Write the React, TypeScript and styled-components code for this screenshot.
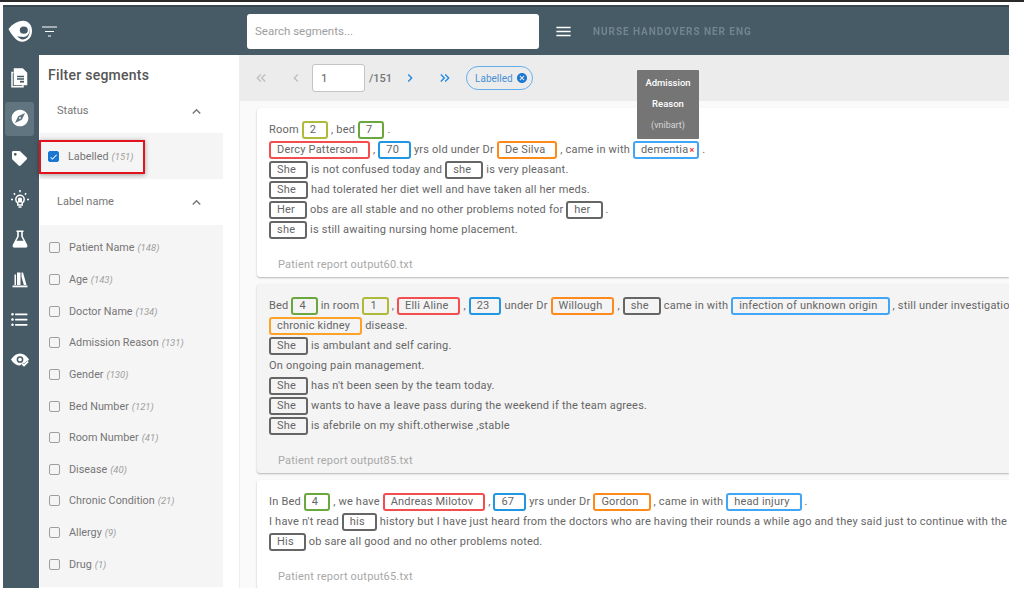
import React from 'react';
import styled, { createGlobalStyle } from 'styled-components';
import {
  MdCancel,
  MdCheck,
  MdChevronLeft,
  MdChevronRight,
  MdExpandLess,
  MdExplore,
  MdFormatListBulleted,
  MdKeyboardDoubleArrowLeft,
  MdKeyboardDoubleArrowRight,
  MdMenu,
} from 'react-icons/md';
import { FaTag } from 'react-icons/fa';

const GlobalStyle = createGlobalStyle`
  html, body {
    margin: 0;
    padding: 0;
    background: #fff;
    font-family: Roboto, "Liberation Sans", sans-serif;
    color: #666;
  }
`;

// the reference is a slightly scaled screenshot, everything in it is a bit soft
const Page = styled.div`
  width: 1024px;
  height: 598px;
  overflow: hidden;
  border-top: 2px solid #2a2a2a;
  box-sizing: border-box;
  padding: 3px 15px 10px 3px;
  position: relative;
  filter: blur(0.35px);
`;

const Shell = styled.div`
  height: 583px;
  display: flex;
  flex-direction: column;
  overflow: hidden;
`;

const TopBar = styled.header`
  height: 50px;
  flex: none;
  box-sizing: border-box;
  border-top: 2px solid #37474f;
  background: #475b66;
  display: flex;
  align-items: center;
  padding-left: 5px;
`;

const Brand = styled.div`
  width: 239px;
  display: flex;
  align-items: center;
  gap: 9px;
  color: #fff;
`;

const SearchBox = styled.input`
  width: 292px;
  height: 35px;
  box-sizing: border-box;
  border: 0;
  border-radius: 3px;
  padding: 0 8px;
  font: 11.5px Roboto, sans-serif;
  background: #fff;
  &::placeholder {
    color: #9e9e9e;
  }
`;

const MenuButton = styled.div`
  display: flex;
  margin: 0 20px 0 15px;
  color: #fff;
`;

const ProjectTitle = styled.div`
  font-size: 10px;
  font-weight: 700;
  letter-spacing: 0.95px;
  color: #71858f;
`;

const Body = styled.div`
  flex: 1;
  min-height: 0;
  display: flex;
`;

const Rail = styled.nav`
  width: 36px;
  flex: none;
  background: #475b66;
  box-sizing: border-box;
  padding: 7px 0 0 2px;
  display: flex;
  flex-direction: column;
  gap: 6.4px;
`;

const RailItem = styled.div<{ $active?: boolean }>`
  width: 29px;
  height: 34px;
  border-radius: 3px;
  background: ${(p) => (p.$active ? '#60757f' : 'transparent')};
  color: #fff;
  display: flex;
  align-items: center;
  justify-content: center;
  padding-bottom: 3px;
  box-sizing: border-box;
`;

const FilterPanel = styled.aside`
  width: 201px;
  flex: none;
  box-sizing: border-box;
  background: #fff;
  padding-left: 1px;
  border-right: 1px solid #eeeeee;
`;

const PanelTitle = styled.h2`
  margin: 0;
  height: 40px;
  padding-left: 8px;
  line-height: 40px;
  font-size: 14px;
  font-weight: 500;
  letter-spacing: 0.25px;
  color: #555;
`;

const SectionHead = styled.div<{ $first?: boolean }>`
  width: 183px;
  height: ${(p) => (p.$first ? '38px' : '46px')};
  padding: 0 17px ${(p) => (p.$first ? '8px' : '2px')};
  box-sizing: border-box;
  display: flex;
  align-items: center;
  justify-content: space-between;
  font-size: 11px;
  color: #757575;
`;

const Chevron = styled(MdExpandLess)`
  font-size: 17px;
  color: #757575;
  margin: 2px 1px 0 0;
`;

const StatusBlock = styled.div`
  width: 183px;
  height: 46px;
  background: #f5f5f5;
  display: flex;
  align-items: center;
`;

const Highlight = styled.div`
  width: 106px;
  height: 34px;
  box-sizing: border-box;
  border: 2px solid #e0141c;
  box-shadow: 0 1px 5px rgba(0, 0, 0, 0.35);
  display: flex;
  align-items: center;
  padding-left: 7px;
  margin-left: -1px;
  margin-top: 1px;
`;

const LabelList = styled.div`
  width: 183px;
  height: 362px;
  box-sizing: border-box;
  background: #f5f5f5;
  padding: 7px 0 0 9px;
`;

const Option = styled.label`
  height: 31.65px;
  display: flex;
  align-items: center;
`;

const Box = styled.span<{ $checked?: boolean }>`
  width: 11px;
  height: 11px;
  box-sizing: border-box;
  flex: none;
  margin-right: 9px;
  border-radius: 2px;
  border: 1px solid ${(p) => (p.$checked ? '#1976d2' : '#9e9e9e')};
  background: ${(p) => (p.$checked ? '#1976d2' : 'transparent')};
  color: #fff;
  display: flex;
  align-items: center;
  justify-content: center;
  font-size: 10px;
`;

const OptionText = styled.span`
  font-size: 10.8px;
  color: #757575;
  white-space: nowrap;
`;

const Count = styled.em`
  font-size: 9.5px;
  color: #9e9e9e;
  margin-left: 3px;
`;

const Main = styled.main`
  flex: 1;
  min-width: 0;
  overflow: hidden;
  background: #fff;
`;

const Pager = styled.div`
  height: 46px;
  background: #ececec;
  display: flex;
  align-items: center;
  padding-left: 13px;
  box-sizing: border-box;
`;

const PageButton = styled.span<{ $enabled?: boolean; $gap: number }>`
  display: flex;
  font-size: 16px;
  color: ${(p) => (p.$enabled ? '#1e88e5' : '#bdbdbd')};
  margin-right: ${(p) => p.$gap}px;
`;

const PageInput = styled.input`
  width: 53px;
  height: 28px;
  box-sizing: border-box;
  border: 1px solid #c4c4c4;
  border-radius: 3px;
  background: #fff;
  padding: 0 8px;
  font: 11.5px Roboto, sans-serif;
  color: #616161;
`;

const PageTotal = styled.span`
  font-size: 11px;
  font-weight: 500;
  color: #757575;
  margin: 0 10px 0 4px;
`;

const Chip = styled.span`
  height: 24px;
  box-sizing: border-box;
  border: 1px solid #64b0ee;
  border-radius: 12px;
  display: flex;
  align-items: center;
  gap: 3px;
  padding: 0 4px 0 8px;
  margin-left: 8px;
  font-size: 10px;
  color: #4a90d6;
`;

const ChipClose = styled(MdCancel)`
  font-size: 12px;
  color: #1976d2;
`;

const CardList = styled.div`
  padding: 7px 0 0 17px;
  display: flex;
  flex-direction: column;
  gap: 7px;
  background: #fafafa;
`;

const Card = styled.article<{ $shaded?: boolean }>`
  padding: 12px 0 3px 12px;
  background: ${(p) => (p.$shaded ? '#f4f4f4' : '#fff')};
  border-radius: 3px 0 0 3px;
  box-shadow: 0 1px 2px rgba(0, 0, 0, 0.28);
`;

const Line = styled.div`
  height: 20px;
  line-height: 20px;
  font-size: 11px;
  letter-spacing: 0.2px;
  white-space: nowrap;
  overflow: hidden;
`;

const tagColors = {
  room: '#afb93a',
  bed: '#6aa83f',
  name: '#f44d4d',
  age: '#2196e3',
  doctor: '#ff8a1c',
  pronoun: '#666666',
  reason: '#42a5f5',
  chronic: '#ffa226',
};

type TagKind = keyof typeof tagColors;

const Tag = styled.span<{ $kind: TagKind; $removable?: boolean }>`
  display: inline-block;
  height: 18px;
  line-height: 14px;
  box-sizing: border-box;
  vertical-align: top;
  margin-top: 1px;
  border: 2px solid ${(p) => tagColors[p.$kind]};
  border-radius: 3px;
  padding: 0 ${(p) => (p.$removable ? '3px' : '10px')} 0 6px;
`;

const RemoveMark = styled.span`
  color: #f44336;
  font-size: 9px;
  font-weight: 700;
  margin-left: 1px;
`;

const SourceName = styled.div`
  height: 18px;
  line-height: 18px;
  margin-top: 16px;
  padding-left: 9px;
  font-size: 11px;
  letter-spacing: 0.2px;
  color: #a8a8a8;
`;

const Tooltip = styled.div`
  position: absolute;
  left: 637px;
  top: 68px;
  width: 62px;
  height: 69px;
  background: #757575;
  border-radius: 1px;
  color: #fff;
  display: flex;
  flex-direction: column;
  align-items: center;
  justify-content: space-around;
  padding: 2px 0 4px;
  box-sizing: border-box;
  font-size: 9.5px;
  font-weight: 500;
`;

const TooltipNote = styled.span`
  font-weight: 400;
  font-size: 9px;
  color: #d6d6d6;
`;

const Logo = () => (
  <svg width="25" height="23" viewBox="0 0 25 23" fill="none">
    <path d="M.5 9C5 3.500 10.500.8 15 .8c5.500 0 9 4.500 9 10.200s-4 10.700-9.800 10.700C8.500 21.700 4 15.500.5 9z" fill="#fff" />
    <path d="M9 16c2 2.300 3.800 3.400 5.600 3.400 4.300 0 7.100-3.800 7.100-8.400 0-1.500-.3-2.900-.9-4.100 2 4.500-.5 10-5.300 10C13 16.900 11 16.600 9 16z" fill="#475b66" />
    <ellipse cx="15.800" cy="10.200" rx="4" ry="3.600" fill="#475b66" />
  </svg>
);

const FilterLinesIcon = () => (
  <svg width="15" height="11" viewBox="0 0 15 11" fill="none" stroke="#fff" strokeWidth="1.200">
    <path d="M0 1h15M3 5.500h9M6 10h3" />
  </svg>
);

const DocsIcon = () => (
  <svg width="17" height="20" viewBox="0 0 17 20" fill="none" stroke="#fff" strokeWidth="1.500">
    <path d="M2.500 4.500h-1.500v14.200h11v-1.500" />
    <path d="M3.500 1h8l4 4v11.500h-12z" fill="#fff" />
    <path d="M6 8.500h7M6 11h7" stroke="#475b66" strokeWidth="1.300" />
    <path d="M9 13.700h4" stroke="#475b66" strokeWidth="1.800" />
  </svg>
);

const BulbIcon = () => (
  <svg width="20" height="19" viewBox="0 0 20 19" fill="none" stroke="#fff" strokeWidth="1.500">
    <path d="M7.800 16v-2.200C6.500 13 5.800 11.800 5.800 10.400a4.200 4.200 0 0 1 8.400 0c0 1.400-.7 2.600-2 3.400V16z" />
    <path d="M8 9.500a2.500 2.500 0 0 1 4 0v4H8z" fill="#fff" stroke="none" />
    <path d="M8.500 18h3M10 1v2.200M1 10.500h2M17 10.500h2M3.800 4.300l1.300 1.300M16.200 4.300l-1.300 1.300" />
  </svg>
);

const FlaskIcon = () => (
  <svg width="16" height="18" viewBox="0 0 16 18" fill="none" stroke="#fff" strokeWidth="1.600" strokeLinejoin="round">
    <path d="M4.500 1.200h7M6 1.200v5.300L1.500 15a1.200 1.200 0 0 0 1 1.700h11a1.200 1.200 0 0 0 1-1.700L10 6.500V1.200" />
    <path d="M4 11.500h8l2.500 5h-13z" fill="#fff" />
  </svg>
);

const BooksIcon = () => (
  <svg width="16" height="17" viewBox="0 0 16 17" fill="#fff">
    <rect x="0.500" y="14.500" width="15" height="1.800" />
    <rect x="2.500" y="3.500" width="1.500" height="10.500" />
    <rect x="5" y="1.500" width="3.500" height="12.500" />
    <path d="M9.500 1.500h1.500L14.500 14H11.800L9.500 6z" />
  </svg>
);

const EyeCheckIcon = () => (
  <svg width="20" height="16" viewBox="0 0 20 16" fill="none">
    <path d="M1 7.500C3.500 3.500 6.500 1.500 10 1.500s6.500 2 9 6c-2.500 4-5.500 6-9 6s-6.500-2-9-6z" fill="#fff" />
    <circle cx="10" cy="7.500" r="2.600" stroke="#475b66" strokeWidth="1.500" />
    <path d="M11.500 12l2.500 2.500 4.500-4.500" stroke="#475b66" strokeWidth="4" />
    <path d="M12 11.500l2 2 4-4" stroke="#fff" strokeWidth="1.800" />
  </svg>
);

const railItems = [
  <DocsIcon key="docs" />,
  <MdExplore size={20} key="explore" />,
  <FaTag size={15} key="tag" />,
  <BulbIcon key="bulb" />,
  <FlaskIcon key="flask" />,
  <BooksIcon key="books" />,
  <MdFormatListBulleted size={21} key="list" />,
  <EyeCheckIcon key="eye" />,
];

const labelOptions: [string, number][] = [
  ['Patient Name', 148],
  ['Age', 143],
  ['Doctor Name', 134],
  ['Admission Reason', 131],
  ['Gender', 130],
  ['Bed Number', 121],
  ['Room Number', 41],
  ['Disease', 40],
  ['Chronic Condition', 21],
  ['Allergy', 9],
  ['Drug', 1],
];

// a line is plain strings mixed with [text, kind] pairs for the labelled words
type Segment = string | [string, TagKind, boolean?];

const reports: { file: string; lines: Segment[][] }[] = [
  {
    file: 'Patient report output60.txt',
    lines: [
      ['Room ', ['2', 'room'], ' , bed ', ['7', 'bed'], ' .'],
      [['Dercy Patterson', 'name'], ' , ', ['70', 'age'], ' yrs old under Dr ', ['De Silva', 'doctor'], ' , came in with ', ['dementia', 'reason', true], ' .'],
      [['She', 'pronoun'], ' is not confused today and ', ['she', 'pronoun'], ' is very pleasant.'],
      [['She', 'pronoun'], ' had tolerated her diet well and have taken all her meds.'],
      [['Her', 'pronoun'], ' obs are all stable and no other problems noted for ', ['her', 'pronoun'], ' .'],
      [['she', 'pronoun'], ' is still awaiting nursing home placement.'],
    ],
  },
  {
    file: 'Patient report output85.txt',
    lines: [
      ['Bed ', ['4', 'bed'], ' in room ', ['1', 'room'], ' , ', ['Elli Aline', 'name'], ' , ', ['23', 'age'], ' under Dr ', ['Willough', 'doctor'], ' , ', ['she', 'pronoun'], ' came in with ', ['infection of unknown origin', 'reason'], ' , still under investigation for'],
      [['chronic kidney', 'chronic'], ' disease.'],
      [['She', 'pronoun'], ' is ambulant and self caring.'],
      ['On ongoing pain management.'],
      [['She', 'pronoun'], " has n't been seen by the team today."],
      [['She', 'pronoun'], ' wants to have a leave pass during the weekend if the team agrees.'],
      [['She', 'pronoun'], ' is afebrile on my shift.otherwise ,stable'],
    ],
  },
  {
    file: 'Patient report output65.txt',
    lines: [
      ['In Bed ', ['4', 'bed'], ' , we have ', ['Andreas Milotov', 'name'], ' , ', ['67', 'age'], ' yrs under Dr ', ['Gordon', 'doctor'], ' , came in with ', ['head injury', 'reason'], ' .'],
      ["I have n't read ", ['his', 'pronoun'], ' history but I have just heard from the doctors who are having their rounds a while ago and they said just to continue with the'],
      [['His', 'pronoun'], ' ob sare all good and no other problems noted.'],
    ],
  },
];

const App = () => {
  return (
    <Page>
      <GlobalStyle />
      <Shell>
        <TopBar>
          <Brand>
            <Logo />
            <FilterLinesIcon />
          </Brand>
          <SearchBox placeholder="Search segments..." />
          <MenuButton>
            <MdMenu size={19} />
          </MenuButton>
          <ProjectTitle>NURSE HANDOVERS NER ENG</ProjectTitle>
        </TopBar>
        <Body>
          <Rail>
            {railItems.map((icon, i) => (
              <RailItem key={i} $active={i === 1}>
                {icon}
              </RailItem>
            ))}
          </Rail>
          <FilterPanel>
            <PanelTitle>Filter segments</PanelTitle>
            <SectionHead $first>
              Status
              <Chevron />
            </SectionHead>
            <StatusBlock>
              <Highlight>
                <Box $checked>
                  <MdCheck />
                </Box>
                <OptionText>
                  Labelled<Count>(151)</Count>
                </OptionText>
              </Highlight>
            </StatusBlock>
            <SectionHead>
              Label name
              <Chevron />
            </SectionHead>
            <LabelList>
              {labelOptions.map(([name, count]) => (
                <Option key={name}>
                  <Box />
                  <OptionText>
                    {name}
                    <Count>({count})</Count>
                  </OptionText>
                </Option>
              ))}
            </LabelList>
          </FilterPanel>
          <Main>
            <Pager>
              <PageButton $gap={19}>
                <MdKeyboardDoubleArrowLeft />
              </PageButton>
              <PageButton $gap={8}>
                <MdChevronLeft />
              </PageButton>
              <PageInput defaultValue="1" />
              <PageTotal>/151</PageTotal>
              <PageButton $enabled $gap={19}>
                <MdChevronRight />
              </PageButton>
              <PageButton $enabled $gap={5}>
                <MdKeyboardDoubleArrowRight />
              </PageButton>
              <Chip>
                Labelled
                <ChipClose />
              </Chip>
            </Pager>
            <CardList>
              {reports.map((report, i) => (
                <Card key={report.file} $shaded={i === 1}>
                  {report.lines.map((line, j) => (
                    <Line key={j}>
                      {line.map((seg, k) =>
                        typeof seg === 'string' ? (
                          seg
                        ) : (
                          <Tag key={k} $kind={seg[1]} $removable={seg[2]}>
                            {seg[0]}
                            {seg[2] && <RemoveMark>×</RemoveMark>}
                          </Tag>
                        ),
                      )}
                    </Line>
                  ))}
                  <SourceName>{report.file}</SourceName>
                </Card>
              ))}
            </CardList>
          </Main>
        </Body>
      </Shell>
      <Tooltip>
        <span>Admission</span>
        <span>Reason</span>
        <TooltipNote>(vnibart)</TooltipNote>
      </Tooltip>
    </Page>
  );
};

export default App;
